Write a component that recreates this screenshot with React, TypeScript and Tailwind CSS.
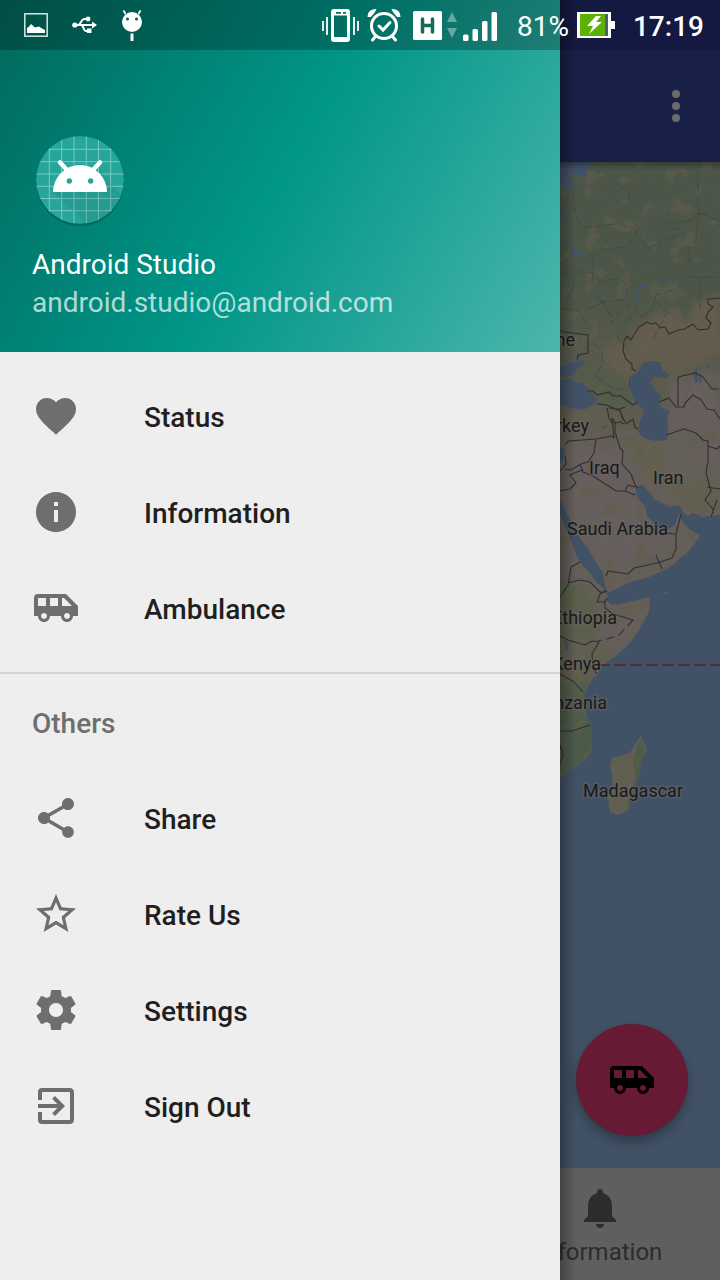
import type { ReactNode } from "react";
import { MdAirportShuttle, MdExitToApp, MdFavorite, MdInfo, MdShare } from "react-icons/md";

const EURASIA =
  "M540 150H730V514L720 515 702 517 697 514 692 513 688 516 683 512 681 507 678 505 670 507 660 502 655 500 650 493 643 485 635 486 637 497 645 507 647 517 652 521 657 527 667 530 675 525 680 512 681 520 690 530 700 535 695 543 687 553 680 558 673 565 660 572 647 578 633 581 620 587 610 592 606 590 604 580 603 573 597 564 587 547 582 541 575 530 567 514 560 500 540 470Z";
const AFRICA =
  "M540 490L560 515 571 540 577 557 583 566 590 573 597 583 605 590 608 597 606 600 612 605 617 605 630 602 650 597 649 612 643 623 638 632 628 645 617 655 608 661 600 668 597 676 593 677 585 692 584 707 590 723 592 737 592 750 583 762 570 770 560 778 540 790Z";
const MADAGASCAR =
  "M641 736L645 745 647 752 643 757 640 770 635 788 628 810 618 815 610 812 608 797 613 785 612 773 610 765 613 758 620 756 630 753 634 746Z";

const menuIcon = "size-12 shrink-0 text-[#6e6e6e]";

function Glyph({ d, className }: { d: string; className: string }) {
  return (
    <svg viewBox="0 0 24 24" fill="currentColor" className={className} aria-hidden="true">
      <path d={d} />
    </svg>
  );
}

const STAR =
  "M22 9.24l-7.19-.62L12 2 9.19 8.63 2 9.24l5.46 4.73L5.82 21 12 17.27 18.18 21l-1.63-7.03L22 9.24zM12 15.4l-3.76 2.27 1-4.28-3.32-2.88 4.38-.38L12 6.1l1.71 4.04 4.38.38-3.32 2.88 1 4.28L12 15.4z";
const GEAR =
  "M19.43 12.98c.04-.32.07-.64.07-.98s-.03-.66-.07-.98l2.11-1.65c.19-.15.24-.42.12-.64l-2-3.46c-.12-.22-.39-.3-.61-.22l-2.49 1c-.52-.4-1.08-.73-1.69-.98l-.38-2.65C14.46 2.18 14.25 2 14 2h-4c-.25 0-.46.18-.49.42l-.38 2.65c-.61.25-1.17.59-1.69.98l-2.49-1c-.23-.09-.49 0-.61.22l-2 3.46c-.13.22-.07.49.12.64l2.11 1.65c-.04.32-.07.65-.07.98s.03.66.07.98l-2.11 1.65c-.19.15-.24.42-.12.64l2 3.46c.12.22.39.3.61.22l2.49-1c.52.4 1.08.73 1.69.98l.38 2.65c.03.24.24.42.49.42h4c.25 0 .46-.18.49-.42l.38-2.65c.61-.25 1.17-.59 1.69-.98l2.49 1c.23.09.49 0 .61-.22l2-3.46c.12-.22.07-.49-.12-.64l-2.11-1.65zM12 15.5c-1.93 0-3.5-1.57-3.5-3.5s1.57-3.5 3.5-3.5 3.5 1.57 3.5 3.5-1.57 3.5-3.5 3.5z";
const BELL =
  "M12 22c1.1 0 2-.9 2-2h-4c0 1.1.89 2 2 2zm6-6v-5c0-3.07-1.64-5.64-4.5-6.32V4c0-.83-.67-1.5-1.5-1.5s-1.5.67-1.5 1.5v.68C7.63 5.36 6 7.92 6 11v5l-2 2v1h16v-1l-2-2z";

function MenuItem({ icon, label }: { icon: ReactNode; label: string }) {
  return (
    <li>
      <a href="#" className="flex h-24 items-center gap-16 px-8 text-[28px] font-medium text-[#1f1f1f]">
        {icon}
        <span className="pt-1">{label}</span>
      </a>
    </li>
  );
}

function Avatar() {
  const lines = [17.3, 29.7, 42, 54.3, 66.5, 78.7];
  return (
    <svg viewBox="0 0 96 96" className="size-24" aria-hidden="true">
      <defs>
        <clipPath id="disc">
          <circle cx="48" cy="48" r="44" />
        </clipPath>
      </defs>
      <circle cx="48" cy="50" r="44" fill="#00564b" opacity=".55" />
      <g clipPath="url(#disc)">
        <circle cx="48" cy="48" r="44" fill="#26a69a" />
        {lines.map((n) => (
          <path key={n} d={`M${n} 0V96M0 ${n}H96`} stroke="#7cc8c0" strokeWidth="1" />
        ))}
        <path d="M21 60L58 96H96V72L67 38 75 60Z" fill="#12695f" opacity=".14" />
      </g>
      <path d="M21 60a27 27 0 0 1 54 0z" fill="#fff" />
      <path d="M28 30.500L36 39M68 30.500L60 39" stroke="#fff" strokeWidth="4.500" strokeLinecap="round" />
      <circle cx="37.300" cy="49" r="2.700" fill="#26a69a" />
      <circle cx="58.700" cy="49" r="2.700" fill="#26a69a" />
    </svg>
  );
}

function StatusBar() {
  return (
    <div className="absolute inset-x-0 top-0 flex h-[50px] items-center justify-between pl-6 pr-4 text-white">
      <div className="flex items-center gap-6">
        <svg viewBox="0 0 24 24" className="size-6" aria-hidden="true">
          <rect x=".8" y=".8" width="22.400" height="22.400" fill="none" stroke="#d5e6e3" strokeWidth="1.500" />
          <path d="M3 20v-5l2-1.500 2-2.500 4 3.500 4-1 3 2 3 1.500v3z" fill="#fff" />
        </svg>
        <svg viewBox="0 0 25 18" className="h-[18px] w-[25px]" fill="none" stroke="#fff" strokeWidth="2" aria-hidden="true">
          <path d="M2 9H22M6 9C9 9 9 3 12 3H15M9 9C12 9 11 15 14 15H17" />
          <circle cx="2.800" cy="9" r="2.600" fill="#fff" stroke="none" />
          <circle cx="16" cy="3" r="2.400" fill="#fff" stroke="none" />
          <path d="M15 12.500h4.500v4.500h-4.500zM20 5.500l5 3.500-5 3.500z" fill="#fff" stroke="none" />
        </svg>
        <svg viewBox="0 0 22 32" className="h-8 w-[22px]" aria-hidden="true">
          <path d="M4.500 5L2.500 1.500M17.500 5L19.500 1.500" stroke="#fff" strokeWidth="1.800" />
          <path d="M11 24.500v7.500" stroke="#fff" strokeWidth="3" />
          <circle cx="11" cy="13" r="10" fill="#fff" />
          <circle cx="6.500" cy="10" r="1.500" fill="#00594f" />
          <circle cx="15.500" cy="10" r="1.500" fill="#00594f" />
        </svg>
      </div>
      <div className="flex items-center">
        <svg viewBox="0 0 38 34" className="mr-2 h-[34px] w-[38px]" fill="none" stroke="#fff" aria-hidden="true">
          <path d="M2 13v10M6 9v18M33 9v18M37 13v10" strokeWidth="1.800" />
          <rect x="11.500" y="2.500" width="16" height="30" rx="1.500" strokeWidth="3" />
          <path d="M12 5h15" strokeWidth="5" />
          <path d="M12 30h15" strokeWidth="2" />
          <path d="M15 4.800h5M22 4.800h3" stroke="#0a695f" strokeWidth="1.800" />
        </svg>
        <svg viewBox="0 0 34 34" className="mr-3 size-[34px]" fill="none" stroke="#fff" strokeLinecap="round" aria-hidden="true">
          <circle cx="17" cy="18" r="12.500" strokeWidth="3" />
          <path d="M12 18l4 4 7-7.500" strokeWidth="3" />
          <path d="M8 29l-2.500 3M26 29l2.500 3" strokeWidth="3" />
          <path d="M1.500 8Q2 2.500 8 2L7 4 3.500 8zM32.500 8Q32 2.500 26 2L27 4 30.500 8z" fill="#fff" strokeWidth="1.800" />
        </svg>
        <svg viewBox="0 0 29 29" className="mr-[5px] size-[29px]" aria-hidden="true">
          <rect width="29" height="29" rx="1.500" fill="#fff" />
          <path d="M9.500 8v13M19.500 8v13M9.500 14.500h10" stroke="#15695f" strokeWidth="3.500" strokeLinecap="round" />
        </svg>
        <svg viewBox="0 0 10 26" className="mr-[6px] h-[26px] w-[10px]" fill="#64a9a1" aria-hidden="true">
          <path d="M0 10L5 0 10 10zM0 16H10L5 26z" />
        </svg>
        <svg viewBox="0 0 34 30" className="mr-5 mt-1 h-[30px] w-[34px]" fill="#fff" aria-hidden="true">
          <rect x="0" y="22.500" width="5.500" height="6.500" rx="1.500" />
          <rect x="9.500" y="17" width="5.500" height="12" rx="1.500" />
          <rect x="19" y="9" width="5.500" height="20" rx="1.500" />
          <rect x="28.500" y="0" width="5.500" height="29" rx="1.500" />
        </svg>
        <span className="mr-2 pt-1 text-[28px] leading-none">81%</span>
        <svg viewBox="0 0 38 26" className="mr-[18px] h-[26px] w-[38px]" aria-hidden="true">
          <path d="M0 0H34V9H38V17H34V26H0z" fill="#fff" />
          <path d="M3 2H28V24H3z" fill="#59b300" />
          <path d="M28 2h3v22h-3z" fill="#5a5a78" />
          <path d="M19 4L10 14h6l-4 8 13-12h-6l5-6z" fill="#fff" />
        </svg>
        <span className="pt-1 text-[28px] font-medium leading-none">17:19</span>
      </div>
    </div>
  );
}

const labels: { text: string; x: number; y: number; anchor: "start" | "end" }[] = [
  { text: "Ukraine", x: 575, y: 346, anchor: "end" },
  { text: "Turkey", x: 589, y: 432, anchor: "end" },
  { text: "Iraq", x: 589, y: 474, anchor: "start" },
  { text: "Iran", x: 653, y: 484, anchor: "start" },
  { text: "Saudi Arabia", x: 668, y: 535, anchor: "end" },
  { text: "Ethiopia", x: 617, y: 624, anchor: "end" },
  { text: "Kenya", x: 601, y: 670, anchor: "end" },
  { text: "Tanzania", x: 607, y: 709, anchor: "end" },
  { text: "Madagascar", x: 683, y: 797, anchor: "end" },
];

function WorldMap() {
  return (
    <svg
      viewBox="0 162 720 1006"
      preserveAspectRatio="xMaxYMin slice"
      className="absolute inset-0 size-full"
      role="img"
      aria-label="Map"
    >
      <defs>
        <clipPath id="land">
          <path d={EURASIA} />
          <path d={AFRICA} />
          <path d={MADAGASCAR} />
        </clipPath>
        <linearGradient id="north" x1="0" y1="162" x2="0" y2="460" gradientUnits="userSpaceOnUse">
          <stop offset="0" stopColor="#4b5548" />
          <stop offset=".42" stopColor="#4c5648" />
          <stop offset=".6" stopColor="#55594a" />
          <stop offset="1" stopColor="#625e52" />
        </linearGradient>
        <filter id="mottle" x="0" y="0" width="1" height="1" colorInterpolationFilters="sRGB">
          <feTurbulence type="fractalNoise" baseFrequency=".06" numOctaves="3" seed="8" />
          <feColorMatrix values="0 0 0 0 .38  0 0 0 0 .37  0 0 0 0 .30  7 0 0 0 -3.900" />
        </filter>
        <filter id="feather" x="-.3" y="-.3" width="1.600" height="1.600" colorInterpolationFilters="sRGB">
          <feGaussianBlur stdDeviation="4" />
        </filter>
      </defs>

      <rect x="0" y="162" width="720" height="1006" fill="#425266" />
      <g clipPath="url(#land)">
        <rect x="540" y="150" width="180" height="670" fill="#655f5a" />
        <rect x="540" y="150" width="180" height="280" fill="url(#north)" />
        <g filter="url(#feather)">
          <path d="M628 335L650 318 720 295V352L668 378 640 362Z" fill="#645d4e" />
          <path d="M668 250L695 240 690 322 680 318Z" fill="#4b5548" />
          <path d="M565 370L600 362 632 392 630 405 600 402Z" fill="#535c4a" />
          <path d="M598 345L632 345 645 362 630 380 612 370Z" fill="#635d4e" />
          <path d="M560 412L600 410 620 420 615 440 560 442Z" fill="#625d50" />
          <path d="M620 440L640 437 668 446 720 480V510L690 510 640 470Z" fill="#636050" />
          <path d="M650 450L690 448 700 480 670 485Z" fill="#655f5a" />
          <path d="M670 378L720 372V470L690 430 668 430Z" fill="#665f5e" />
          <path d="M562 444L612 442 636 480 672 540 610 575 562 500Z" fill="#665f5e" />
          <path d="M555 585L582 582 600 620 595 640 555 640Z" fill="#59604b" />
          <path d="M605 605L650 597 630 635 612 635Z" fill="#665f5c" />
          <path d="M555 715L600 715 595 765 550 790Z" fill="#4c5b49" />
          <path d="M555 640L620 650 590 700 550 700Z" fill="#605f50" />
          <path d="M560 682L590 682 588 712 556 716Z" fill="#515c4a" />
          <path d="M608 755L635 750 628 812 608 812Z" fill="#605f50" />
        </g>
        <rect x="540" y="162" width="180" height="655" filter="url(#mottle)" opacity=".6" />
        <path d="M641 738l5 14-6 18-5 18-5 20-3-4 8-26-2-18 2-8z" fill="#4e5c49" />
      </g>

      <g fill="#425266">
        <path d="M540 160H593L588 170 585 178 577 175 570 175 575 188 566 189 560 183H540Z" />
        <path d="M540 378L560 380 570 378 576 382 583 383 590 391 597 400 593 405 583 410 571 408 560 405H540Z" />
        <path d="M540 368L560 367 570 363 583 360 585 364 576 370 574 375 560 377H540Z" />
        <path d="M643 363L652 361 660 362 663 370 670 375 666 378 653 377 650 383 656 390 661 397 659 404 664 410 670 411 667 417 668 430 667 440 657 441 650 440 643 437 638 432 640 422 643 413 644 410 635 402 629 385 630 377 638 372Z" />
        <path d="M693 372l4-5 1 15-3 1zM699 374l2 0 0 9-2-1zM706 366l3-3-1 6z" />
        <path d="M560 448l5 0-2 12-3 3z" />
        <path d="M602 427l6-3-2 4-4 1zM564 640l3 1 2 10-3-2z" />
      </g>
      <g fill="none" stroke="#405475" strokeWidth="1.500">
        <path d="M651 285l-10 2-5 6 2 11M658 281l6-2M573 250l8 4-5 2zM605 268v4M678 251l3 2M560 210l5 12" />
        <path d="M560 360l25-5M598 350l9-7M633 315l-10 8M607 205l3 3M637 212l6-2" strokeWidth="1" />
      </g>
      <path d="M663 593l4-1 2 1-3 1z" fill="#665f5e" />

      <g fill="none" stroke="#3d473f" strokeWidth=".8" strokeDasharray="10 3">
        <path d="M574 190l1 25 8 13 33-4 4-2 11 9 5-6 0 10 8 6 3 9 5-4 8-2 4-6 10 0 3-9-12-1 4-5 20-2 12-7 13-2 M698 170v47l-2 23-8 12 3 15" />
        <path d="M698 213l22 8M618 185l12 8-1 10 6 6M592 258l10-8 27-4 4-10M592 258l1 25M560 272l32 0 8 10 20-4 8 10-3 12-20 2-12-8M575 282l-8 20M600 300l14 18 16-14M560 308l20 3 8 18M586 310l18-8 10 24M625 324l13-16M640 318l12-8 4-15 20-6M655 300l12 12-14 28M616 335l12 15M690 277h30M700 277v32M583 350l8-8 10 8 2 14-8 12 20 14 14-2 1-12" />
      </g>
      <g fill="none" stroke="#302f31" strokeWidth="1.100" strokeLinejoin="round">
        <path d="M720 298l-12 1 0 5 5 3-5 5-2 6 5 5-3 6-10 1-5-6-8 5-7 1-9 4-4-7-5 1-4-5-5 1-4-2-8 5-4 6-4 7-4-4-3 5-1 10 3 8 6 5 0 5 4 2" />
        <path d="M560 330l4 2 24 3 0 18-10 2-1 5" />
        <path d="M587 391l6 0 4 4 12-3 4 4 8 0 12 9 4-3M597 404l10 1 10 5 8-3M607 408l2 10 3 5 8-1 4 2M609 408l10 1 5 11 2 4 7-5 2 8 3 2M620 410l3 10" />
        <path d="M565 445l3-4 28-2 16-3 2 2-2-20 3 4 0 10 5 16 3 3-1 13 9 10 4 11 3 3" />
        <path d="M596 439l-2 14-6 9-7 2-10 6-6-1M580 464l3 8 10 4 23 15 9 0 10 4M560 491l10-2 6-6-6-8 12-5M625 491l3-6 7 2M565 456l1 8-6 7" />
        <path d="M678 406v-29l17-4 8 4 9 12 7 0M659 402l10-4 7 9 8 0 1-4 8-8 8 5 6 9 7 1 6 9M666 435l18-6 12 4 7 7 5 1 0 8 0 12-2 12 5 18-6 9 8 9 0 4M708 446l9 3 3-3M707 487l13 2M717 500l-6 17" />
        <path d="M681 514l-5 20 0 15-4 9-15 5-23 5-6 6-20-3-2 5M656 555l6 14M667 533l8 1" />
        <path d="M580 562l-9 5-3 18-8 12M568 583l12-3 10 2 10 10 6 0M600 594l4-2 2-2M600 594l-3 8 8 0 2-4M605 602l0 6 8 6 20 6-2 2M560 636l8 4 17 5 7-4 7 1 0 0-7 12 1 14 4 6M560 674l14 8 9 10M560 731l12 0 18-6M560 745l3 10-3 9" />
        <path d="M633 620l-15 16-20 5" strokeDasharray="8 5" />
      </g>
      <path d="M594 665H720" stroke="#542b36" strokeWidth="2" strokeDasharray="12 4" strokeDashoffset="12" />

      <g
        fontSize="18"
        fill="#191919"
        stroke="#68656380"
        strokeWidth="3"
        strokeLinejoin="round"
        paintOrder="stroke"
      >
        {labels.map((l) => (
          <text key={l.text} x={l.x} y={l.y} textAnchor={l.anchor}>
            {l.text}
          </text>
        ))}
      </g>
    </svg>
  );
}

export default function App() {
  return (
    <div className="relative flex min-h-screen flex-col overflow-hidden bg-[#5f5f5f] font-['Roboto',sans-serif]">
      <div className="h-[50px] shrink-0 bg-[#131940]" />
      <header className="flex h-28 shrink-0 items-center justify-end bg-[#192048] pr-5">
        <button type="button" aria-label="More options" className="flex size-12 flex-col items-center justify-center gap-1">
          <span className="size-2 rounded-full bg-[#6b6b6b]" />
          <span className="size-2 rounded-full bg-[#6b6b6b]" />
          <span className="size-2 rounded-full bg-[#6b6b6b]" />
        </button>
      </header>

      <main className="relative flex-1 overflow-hidden">
        <WorldMap />
        <div className="absolute inset-x-0 top-0 h-2 bg-linear-to-b from-black/30 to-transparent" />
        <button
          type="button"
          aria-label="Call ambulance"
          className="absolute bottom-8 right-8 flex size-28 items-center justify-center rounded-full bg-[#661a33] text-black shadow-[0_6px_12px_rgba(0,0,0,0.3)]"
        >
          <MdAirportShuttle className="size-12" />
        </button>
      </main>

      <nav className="flex h-28 shrink-0 justify-end bg-[#5f5f5f]">
        <a href="#" className="flex w-1/3 flex-col items-center pt-4 text-2xl text-[#2c2c2c]">
          <Glyph d={BELL} className="size-12" />
          <span className="mt-1">Information</span>
        </a>
      </nav>

      <aside className="absolute inset-y-0 left-0 w-7/9 bg-[#eeeeee]">
        <div className="absolute inset-y-0 left-full w-4 bg-linear-to-r from-black/30 to-transparent" />
        <div className="flex h-[352px] flex-col justify-end bg-[linear-gradient(120deg,#00695c,#009688_50%,#4db6ac)] px-8 pb-[30px] text-[28px] leading-[38px]">
          <div className="absolute inset-x-0 top-0 h-[50px] bg-black/25" />
          <Avatar />
          <p className="mt-[18px] text-white">Android Studio</p>
          <p className="text-white/70">android.studio@android.com</p>
        </div>
        <ul className="py-4">
          <MenuItem icon={<MdFavorite className={menuIcon} />} label="Status" />
          <MenuItem icon={<MdInfo className={menuIcon} />} label="Information" />
          <MenuItem icon={<MdAirportShuttle className={menuIcon} />} label="Ambulance" />
        </ul>
        <div className="border-t-2 border-[#d4d4d4]">
          <h2 className="flex h-24 items-center px-8 pt-1 text-[28px] font-medium text-[#6e6e6e]">Others</h2>
          <ul>
            <MenuItem icon={<MdShare className={menuIcon} />} label="Share" />
            <MenuItem icon={<Glyph d={STAR} className={menuIcon} />} label="Rate Us" />
            <MenuItem icon={<Glyph d={GEAR} className={menuIcon} />} label="Settings" />
            <MenuItem icon={<MdExitToApp className={menuIcon} />} label="Sign Out" />
          </ul>
        </div>
      </aside>

      <StatusBar />
    </div>
  );
}
